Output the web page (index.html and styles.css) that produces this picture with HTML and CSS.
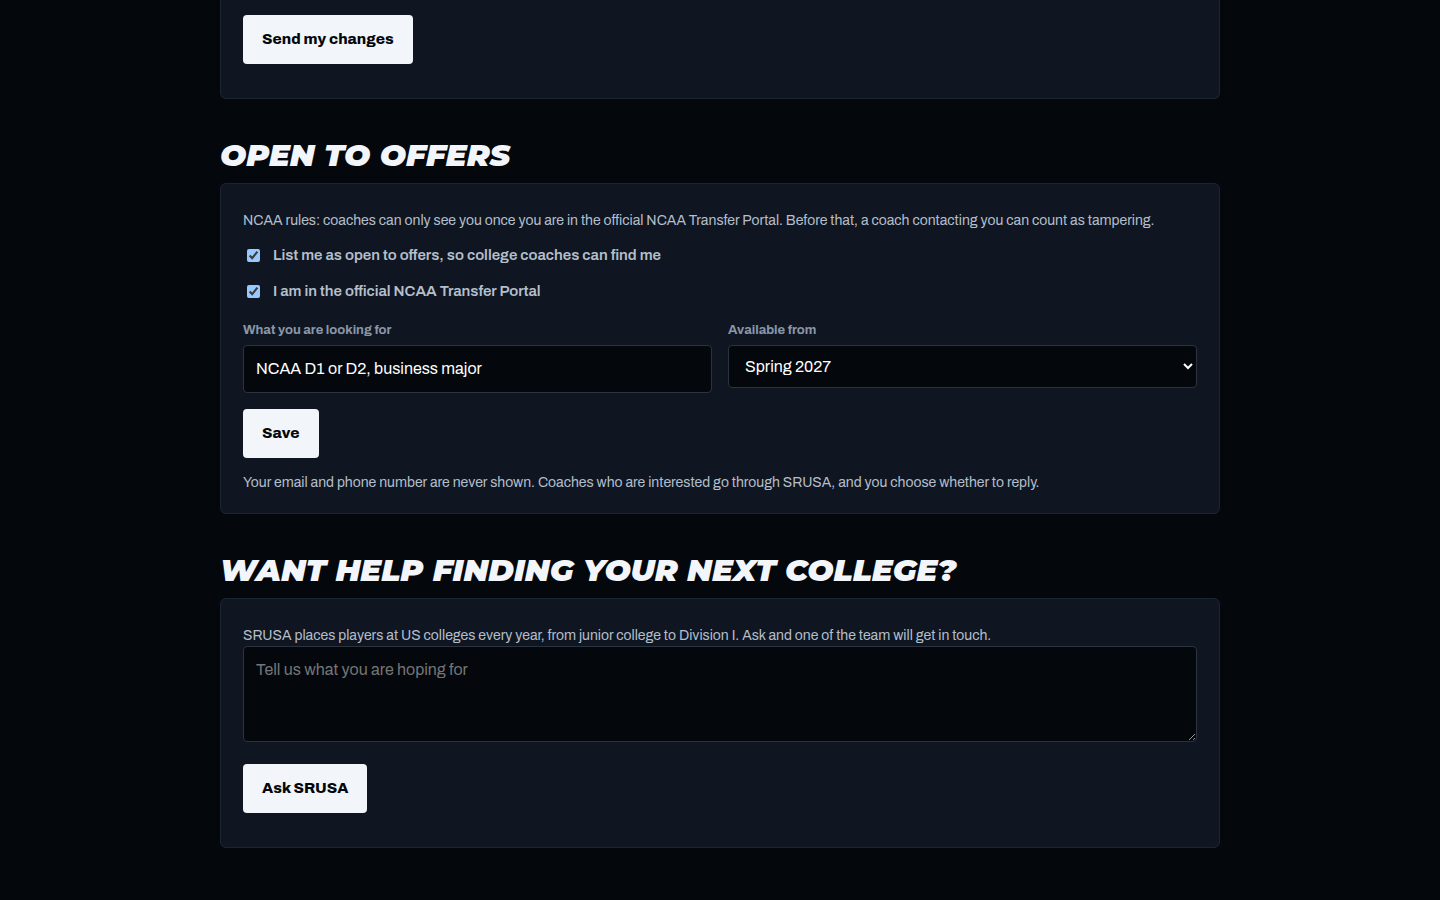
FILE: index.html
```html
<!DOCTYPE html>
<html lang="en">
<head>
    <meta charset="UTF-8">
    <meta name="viewport" content="width=device-width, initial-scale=1.0">
    <title>SRUSA - My profile</title>
    <link rel="stylesheet" href="styles.css">
</head>
<body>
    <main class="wrap">
        <form class="card card-top">
            <button class="btn" type="button">Send my changes</button>
        </form>

        <h2>Open to offers</h2>
        <form class="card card-offers">
            <p class="note">NCAA rules: coaches can only see you once you are in the official NCAA Transfer Portal. Before that, a coach contacting you can count as tampering.</p>
            <label class="check"><input type="checkbox" checked> List me as open to offers, so college coaches can find me</label>
            <label class="check"><input type="checkbox" checked> I am in the official NCAA Transfer Portal</label>
            <div class="fields">
                <div class="field">
                    <label for="looking">What you are looking for</label>
                    <input type="text" id="looking" value="NCAA D1 or D2, business major">
                </div>
                <div class="field">
                    <label for="available">Available from</label>
                    <select id="available">
                        <option>Spring 2027</option>
                        <option>Fall 2027</option>
                    </select>
                </div>
            </div>
            <button class="btn" type="button">Save</button>
            <p class="note">Your email and phone number are never shown. Coaches who are interested go through SRUSA, and you choose whether to reply.</p>
        </form>

        <h2>Want help finding your next college?</h2>
        <form class="card card-help">
            <label class="note" for="hoping">SRUSA places players at US colleges every year, from junior college to Division I. Ask and one of the team will get in touch.</label>
            <textarea id="hoping" placeholder="Tell us what you are hoping for"></textarea>
            <button class="btn" type="button">Ask SRUSA</button>
        </form>
    </main>
</body>
</html>
```

FILE: styles.css
```css
:root {
    color-scheme: dark;
    --bg: #04080c;
    --card: #0f1621;
    --line: #1b2530;
    --field-line: #2b333e;
    --white: #f2f5fa;
    --text: #b4bfcc;
    --muted: #8996a8;
}
* {
    box-sizing: border-box;
}
body {
    margin: 0;
    background: var(--bg);
    color: var(--text);
    font-family: Archivo, "Liberation Sans", Arial, sans-serif;
    font-size: 16px;
    line-height: 24px;
}
.wrap {
    max-width: 1000px;
    margin: 0 auto;
    padding-bottom: 48px;
}
h2 {
    margin: 36px 0 8px;
    color: var(--white);
    font-family: Gotham, Montserrat, Inter, sans-serif;
    font-size: 31px;
    font-weight: 900;
    font-style: italic;
    line-height: 40px;
    text-transform: uppercase;
}
.card {
    padding: 26px 22px 20px;
    background: var(--card);
    border: 1px solid var(--line);
    border-radius: 6px;
}
.card-top {
    padding: 15px 22px 34px;
    border-top: 0;
    border-radius: 0 0 6px 6px;
}
.note {
    display: block;
    margin: 0;
    font-size: 14px;
    line-height: 21px;
}
.check {
    display: flex;
    align-items: center;
    gap: 10px;
    margin-top: 12px;
    font-size: 15px;
    font-weight: 600;
}
.check input {
    margin: 3px 3px 3px 4px;
}
.fields {
    display: grid;
    grid-template-columns: 1fr 1fr;
    gap: 16px;
    margin: 16px 0;
}
.field label {
    display: block;
    margin-bottom: 4px;
    color: var(--muted);
    font-size: 13px;
    font-weight: bold;
    line-height: 22px;
}
.field input,
.field select,
textarea {
    display: block;
    width: 100%;
    padding: 11px 12px;
    background: var(--bg);
    border: 1px solid var(--field-line);
    border-radius: 4px;
    color: #fff;
    font-family: inherit;
    font-size: 16px;
    line-height: 24px;
}
.field select {
    height: 43px;
}
textarea {
    height: 96px;
    margin-bottom: 22px;
    resize: vertical;
}
textarea::placeholder {
    color: #757575;
}
.btn {
    display: block;
    height: 49px;
    padding: 0 19px 2px;
    background: var(--white);
    border: 0;
    border-radius: 4px;
    color: var(--bg);
    font-family: inherit;
    font-size: 15px;
    font-weight: 800;
}
.btn + .note {
    margin-top: 14px;
}
.card-help {
    padding-bottom: 34px;
}
```
